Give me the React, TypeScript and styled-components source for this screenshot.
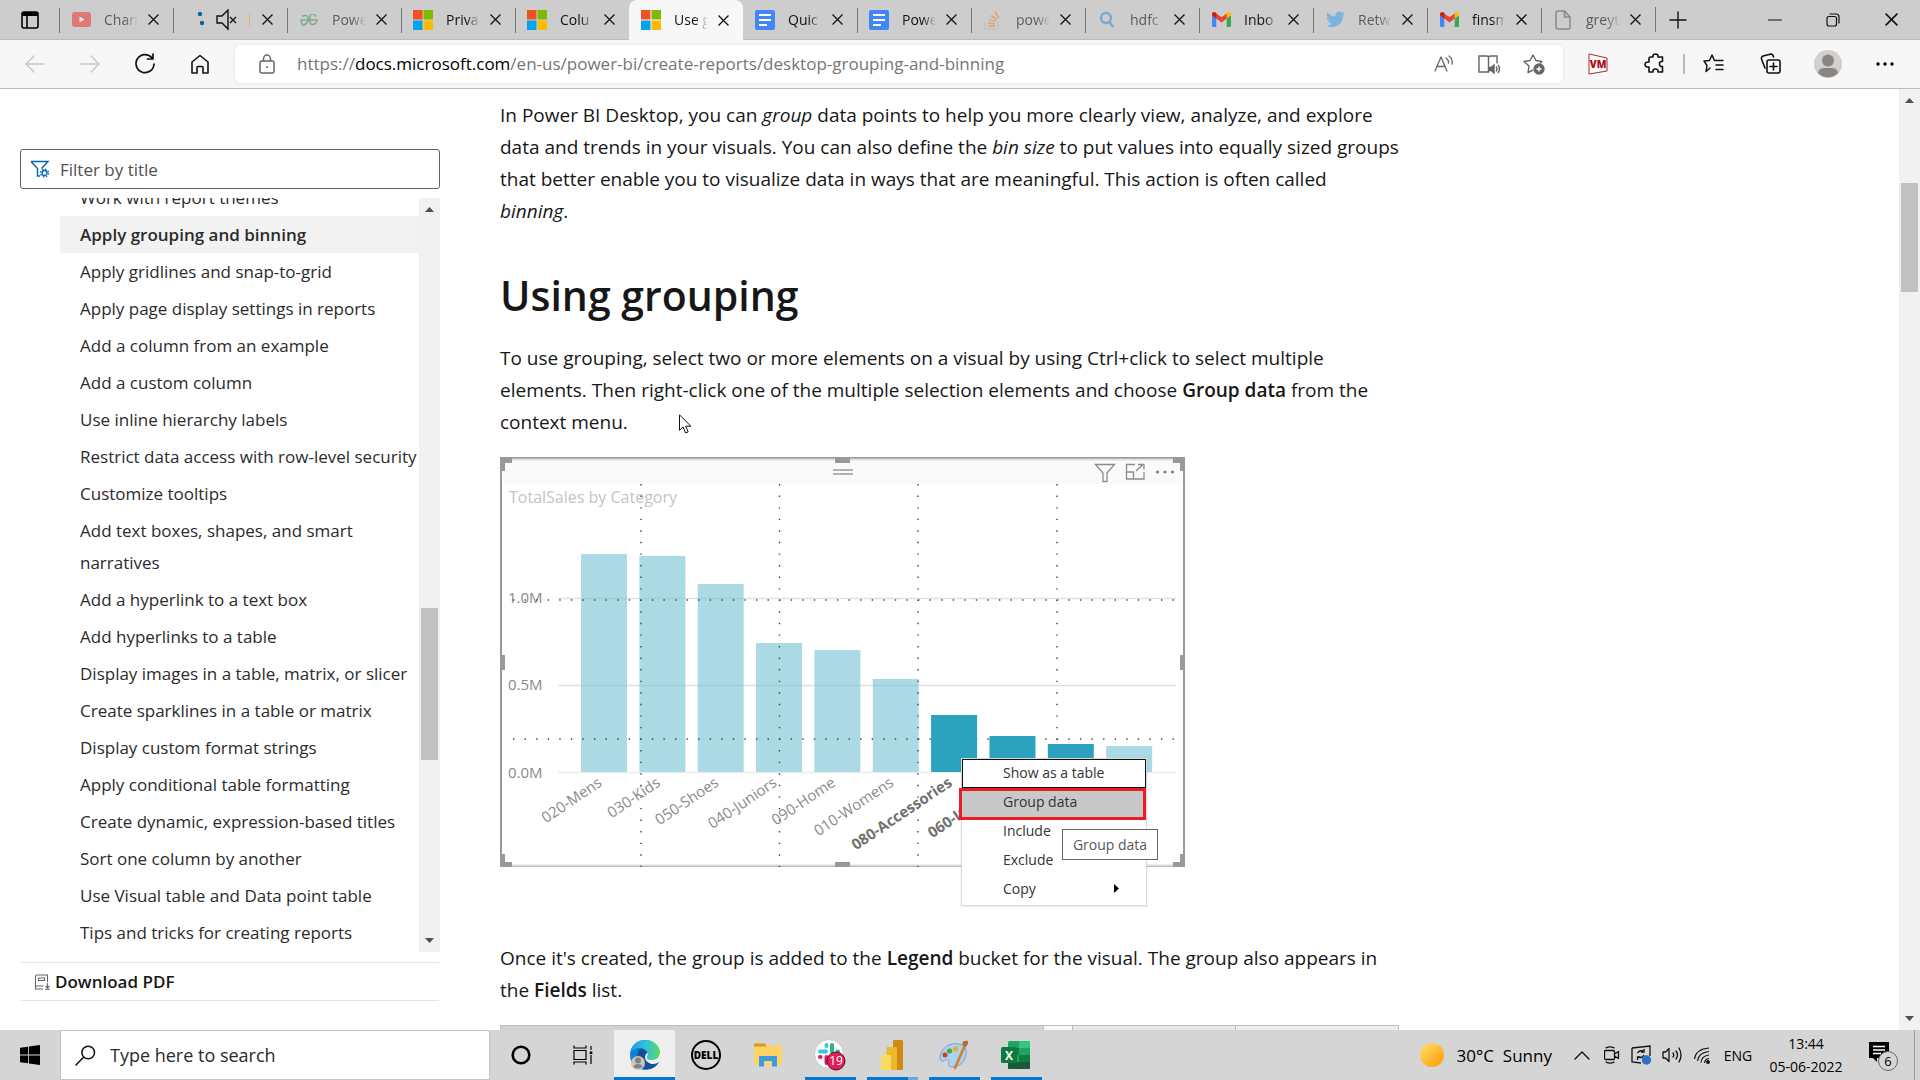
import React from "react";
import styled, { createGlobalStyle } from "styled-components";

const Global = createGlobalStyle`
  * { box-sizing: border-box; }
  body { margin: 0; background: #fff; font-family: "Open Sans", "Noto Sans", sans-serif; color: #171717; }
  button { font: inherit; color: inherit; background: none; border: 0; padding: 0; margin: 0; }
  a { color: inherit; text-decoration: none; }
  input { font: inherit; color: inherit; border: 0; background: none; outline: 0; padding: 0; min-width: 0; }
  svg { display: block; flex: none; }
`;

const Screen = styled.div`
  display: flex;
  flex-direction: column;
  height: 100vh;
  overflow: hidden;
`;

/* ---------- tab strip ---------- */
const TabStrip = styled.header`
  display: flex;
  align-items: stretch;
  height: 40px;
  background: #cdcdcd;
  border-bottom: 1px solid #bdbdbd;
`;
const TabActions = styled.button`
  width: 59px;
  display: grid;
  place-items: center;
`;
const Tabs = styled.nav`
  display: flex;
  align-items: stretch;
`;
const Tab = styled.div<{ $active?: boolean; $line?: boolean; $muted?: boolean }>`
  position: relative;
  display: flex;
  align-items: center;
  justify-content: ${(p) => (p.$muted ? "flex-end" : "flex-start")};
  width: 114px;
  height: ${(p) => (p.$active ? 40 : 39)}px;
  padding: 0 14px 0 11px;
  background: ${(p) => (p.$active ? "#f7f7f7" : "transparent")};
  border-radius: ${(p) => (p.$active ? "8px 8px 0 0" : "0")};
  &::before {
    content: "";
    display: ${(p) => (p.$line ? "block" : "none")};
    position: absolute;
    left: 0;
    top: 8px;
    width: 1px;
    height: 25px;
    background: #777;
  }
`;
const StripEnd = styled.span`
  align-self: center;
  width: 1px;
  height: 25px;
  background: #777;
`;
const Favicon = styled.span<{ $dim?: boolean }>`
  width: 22px;
  height: 20px;
  display: grid;
  place-items: center;
  opacity: ${(p) => (p.$dim ? 0.5 : 1)};
`;
const AudioIcon = styled.span`
  margin-right: 11px;
`;
const TabTitle = styled.a<{ $dim?: boolean }>`
  flex: 1;
  margin: 0 9px 0 12px;
  font-size: 14px;
  line-height: 20px;
  white-space: nowrap;
  overflow: hidden;
  color: ${(p) => (p.$dim ? "#5c5c5c" : "#111")};
  mask-image: linear-gradient(90deg, #000 60%, transparent);
`;
const CloseTab = styled.button`
  width: 12px;
  height: 12px;
  display: grid;
  place-items: center;
`;
const NewTab = styled.button`
  width: 44px;
  display: grid;
  place-items: center;
`;
const WindowButtons = styled.div`
  display: flex;
  margin-left: auto;
`;
const WindowButton = styled.button`
  width: 58px;
  display: grid;
  place-items: center;
`;

/* ---------- toolbar ---------- */
const Toolbar = styled.div`
  display: flex;
  align-items: center;
  height: 49px;
  padding: 0 7px;
  background: #f7f7f7;
  border-bottom: 1px solid #bdbdbd;
`;
const ToolButton = styled.button<{ $wide?: boolean }>`
  width: ${(p) => (p.$wide ? 57 : 55)}px;
  height: 38px;
  display: grid;
  place-items: center;
`;
const AddressBar = styled.div`
  flex: 1;
  display: flex;
  align-items: center;
  height: 38px;
  margin: 0 6px 0 8px;
  padding: 0 7px 0 22px;
  border-radius: 5px;
  background: #fff;
  box-shadow: 0 0 3px rgba(0, 0, 0, 0.1);
`;
const AddressField = styled.label`
  position: relative;
  flex: 1;
  margin-left: 20px;
  font-size: 17px;
  line-height: 26px;
  color: #757575;
  white-space: nowrap;
`;
const AddressInput = styled.input`
  position: absolute;
  inset: 0;
  width: 100%;
`;
const Host = styled.span`
  color: #000;
`;
const BarButton = styled.button`
  width: 45px;
  height: 38px;
  display: grid;
  place-items: center;
`;
const ToolDivider = styled.span`
  width: 2px;
  height: 20px;
  background: #b9b9b9;
`;

/* ---------- page ---------- */
const Page = styled.div`
  flex: 1;
  min-height: 0;
  display: flex;
  background: #fff;
`;
const Sidebar = styled.aside`
  display: flex;
  flex-direction: column;
  width: 440px;
  padding: 60px 0 29px 20px;
  font-size: 17px;
`;
const FilterBox = styled.label`
  display: flex;
  align-items: center;
  gap: 10px;
  height: 40px;
  padding-left: 9px;
  border: 1px solid #606060;
  border-radius: 3px;
  input { flex: 1; font-size: 17px; }
  input::placeholder { color: #505050; opacity: 1; }
`;
const TocFrame = styled.div`
  flex: 1;
  min-height: 0;
  display: flex;
  margin: 9px 0 10px;
`;
const TocClip = styled.div`
  flex: 1;
  min-width: 0;
  overflow: hidden;
`;
const TocList = styled.ul`
  list-style: none;
  margin: -19px 0 0;
  padding: 0 0 0 40px;
`;
const TocItem = styled.li<{ $selected?: boolean }>`
  padding: 3px 0 2px 20px;
  line-height: 32px;
  color: #2b2b2b;
  font-weight: ${(p) => (p.$selected ? 600 : 400)};
  background: ${(p) => (p.$selected ? "#f2f2f2" : "transparent")};
`;
const Download = styled.button`
  display: flex;
  align-items: center;
  gap: 5px;
  height: 39px;
  margin: 0 1px;
  padding-left: 13px;
  border-top: 1px solid #e3e3e3;
  border-bottom: 1px solid #e3e3e3;
  font-weight: 600;
  font-size: 17px;
`;

const Track = styled.div`
  display: flex;
  flex-direction: column;
  align-items: center;
  width: 21px;
  background: #f1f1f1;
`;
const ArrowButton = styled.button`
  width: 21px;
  height: 23px;
  display: grid;
  place-items: center;
  &:last-child { margin-top: auto; }
`;
const Thumb = styled.div<{ $top: number; $size: number }>`
  width: 17px;
  margin-top: ${(p) => p.$top}px;
  height: ${(p) => p.$size}px;
  background: #c1c1c1;
`;

const Article = styled.main`
  flex: 1;
  min-width: 0;
  overflow: hidden;
  padding: 10px 60px 0;
`;
const Prose = styled.div`
  max-width: 899px;
  position: relative;
`;
const Paragraph = styled.p`
  margin: 0;
  font-size: 19px;
  line-height: 32px;
  b { font-weight: 600; }
`;
const Heading = styled.h2`
  margin: 41px 0 20px;
  font-size: 41px;
  line-height: 54px;
  font-weight: 600;
`;
const Figure = styled.figure`
  position: relative;
  margin: 19px 0 37px;
  height: 448px;
  width: 685px;
`;
const ContextMenu = styled.div`
  position: absolute;
  left: 461px;
  top: 301px;
  width: 186px;
  height: 148px;
  background: #fff;
  border: 1px solid #dadada;
  font-size: 14px;
  color: #333;
  box-shadow: 0 1px 2px rgba(0, 0, 0, 0.1);
`;
const MenuItem = styled.button`
  display: flex;
  align-items: center;
  justify-content: space-between;
  width: 184px;
  height: 29px;
  padding: 0 27px 2px 41px;
`;
const FocusedItem = styled(MenuItem)`
  padding-left: 40px;
  border: 1px solid #111;
`;
const MarkedItem = styled(MenuItem)`
  position: relative;
  width: 187px;
  height: 32px;
  margin: 0 0 -3px -3px;
  padding-bottom: 5px;
  border: 3px solid #ec1c24;
  background: #c8c8c8;
`;
const Tooltip = styled.div`
  position: absolute;
  left: 562px;
  top: 372px;
  height: 31px;
  width: 96px;
  text-align: center;
  border: 1px solid #666;
  background: #fff;
  color: #575757;
  font-size: 14px;
  line-height: 29px;
`;
const NextFigure = styled.figure`
  display: flex;
  justify-content: flex-end;
  margin: 19px 0 0;
  height: 60px;
  border: 1px solid #bfbfbf;
  background: linear-gradient(#d2d2d2, #e4e4e4);
`;
const NextPane = styled.div<{ $width: number; $fill: string }>`
  width: ${(p) => p.$width}px;
  background: ${(p) => p.$fill};
  border-left: 1px solid #bfbfbf;
`;
const Pointer = styled.svg`
  position: absolute;
  left: 179px;
  top: 315px;
`;

/* ---------- taskbar ---------- */
const Taskbar = styled.footer`
  display: flex;
  align-items: stretch;
  height: 50px;
  background: #d5d5d5;
  color: #000;
`;
const StartButton = styled.button`
  width: 60px;
  display: grid;
  place-items: center;
`;
const SearchBox = styled.label`
  display: flex;
  align-items: center;
  gap: 14px;
  width: 430px;
  padding-left: 14px;
  background: #fff;
  border: 1px solid #c4c4c4;
  input { flex: 1; font-size: 18px; }
  input::placeholder { color: #2b2b2b; opacity: 1; }
`;
const Apps = styled.div`
  display: flex;
`;
const AppButton = styled.button<{ $open?: boolean; $current?: boolean }>`
  position: relative;
  display: grid;
  place-items: center;
  width: ${(p) => (p.$current ? 61 : 62)}px;
  height: 50px;
  background: ${(p) => (p.$current ? "#eee" : "transparent")};
  &::after {
    content: "";
    display: ${(p) => (p.$open || p.$current ? "block" : "none")};
    position: absolute;
    bottom: 0;
    left: ${(p) => (p.$current ? 0 : 6)}px;
    right: ${(p) => (p.$current ? 0 : 5)}px;
    height: 3px;
    background: #0078d7;
  }
`;
const GroupedAppButton = styled(AppButton)`
  &::after { background: linear-gradient(90deg, #0078d7 80%, #62a9e6 80%); }
`;
const Tray = styled.div`
  display: flex;
  align-items: center;
  margin-left: auto;
  padding-right: 5px;
`;
const Weather = styled.button`
  display: flex;
  align-items: center;
  gap: 13px;
  font-size: 17px;
  margin-right: 15px;
  span { white-space: pre; }
`;
const TrayButton = styled.button`
  width: 30px;
  height: 50px;
  display: grid;
  place-items: center;
`;
const Language = styled.button`
  width: 42px;
  font-size: 14px;
`;
const Clock = styled.button`
  width: 94px;
  font-size: 14px;
  line-height: 23px;
  text-align: center;
`;
const Notifications = styled.button`
  width: 62px;
  height: 50px;
  display: grid;
  place-items: center;
  border-right: 1px solid #9a9a9a;
`;

/* ---------- small drawings ---------- */
const Cross = ({ size = 11 }: { size?: number }) => (
  <svg width={size} height={size} viewBox="0 0 11 11" stroke="#111" strokeWidth="1.3">
    <path d="M.5.5l10 10M10.5.5l-10 10" />
  </svg>
);
const MsLogo = () => (
  <svg width="20" height="20" viewBox="0 0 20 20">
    <path fill="#f25022" d="M0 0h9.5v9.5H0z" />
    <path fill="#7fba00" d="M10.5 0H20v9.5h-9.5z" />
    <path fill="#00a4ef" d="M0 10.5h9.5V20H0z" />
    <path fill="#ffb900" d="M10.5 10.5H20V20h-9.5z" />
  </svg>
);
const DocsLogo = () => (
  <svg width="20" height="20" viewBox="0 0 20 20">
    <rect width="20" height="20" rx="2" fill="#4285f4" />
    <path stroke="#fff" strokeWidth="2" d="M4 5h12M4 10h12M4 15h8" />
  </svg>
);
const Gmail = () => (
  <svg width="19" height="15" viewBox="0 0 19 15">
    <path fill="#4285f4" d="M0 3v10.500Q0 15 1.500 15H4.300V5z" />
    <path fill="#34a853" d="M19 3v10.500q0 1.500-1.500 1.500h-2.800V5z" />
    <path fill="#ea4335" d="M4 1.200L9.500 5.300 15 1.200V6.300l-5.500 4.100L4 6.300z" />
    <path fill="#c5221f" d="M0 2.200C0 0 2.500-.6 4.300.9v5.600L0 3.500z" />
    <path fill="#fbbc04" d="M19 2.200C19 0 16.500-.6 14.700.9v5.600L19 3.500z" />
  </svg>
);
const YouTube = () => (
  <svg width="19" height="15" viewBox="0 0 19 15">
    <rect width="19" height="15" rx="3" fill="#f52525" />
    <path fill="#fff" d="M7.500 4.500v6l5-3z" />
  </svg>
);
const Muted = () => (
  <svg width="54" height="22" viewBox="0 0 54 22">
    <circle cx="4" cy="5" r="2.200" fill="#0b63a8" />
    <circle cx="6" cy="14" r="2.200" fill="#0b63a8" />
    <path d="M21 7h5l6-6v19l-6-6h-5z" fill="none" stroke="#111" strokeWidth="1.400" />
    <path d="M34 8l6 6M40 8l-6 6" stroke="#111" strokeWidth="1.300" />
    <path d="M53.500 5v13" stroke="#e3b45c" />
  </svg>
);
const Geeks = () => (
  <svg width="18" height="12" viewBox="0 0 18 12" fill="none" stroke="#2f8d46" strokeWidth="1.600">
    <path d="M2 2.500Q6.500 0 8 3.500T5.500 10 1 6h16q-1 4.500-4.500 4.500T10 3.500 16 2.500" />
  </svg>
);
const StackOverflow = () => (
  <svg width="18" height="20" viewBox="0 0 18 20" fill="none">
    <path d="M1 12v7h13v-7" stroke="#bbb" strokeWidth="1.600" />
    <path d="M4 16h7M4 13l7 .8M5 9.500l7 2M7 5.500l6 4M11 2l4 6" stroke="#f48024" strokeWidth="1.700" />
  </svg>
);
const SearchFav = () => (
  <svg width="16" height="18" viewBox="0 0 16 18" fill="none" stroke="#2b86d9" strokeWidth="2.400">
    <circle cx="7" cy="7" r="5" />
    <path d="M10.500 11l3.500 5" />
  </svg>
);
const Twitter = () => (
  <svg width="19" height="17" viewBox="0 0 24 20" fill="#2b9df0">
    <path d="M24 2.400a10 10 0 0 1-2.800.8A5 5 0 0 0 23.300.5a10 10 0 0 1-3.100 1.200 4.900 4.900 0 0 0-8.400 4.500A14 14 0 0 1 1.700 1 4.900 4.900 0 0 0 3.200 7.600a5 5 0 0 1-2.200-.6 4.900 4.900 0 0 0 4 4.900 5 5 0 0 1-2.300.1 4.900 4.900 0 0 0 4.600 3.400A10 10 0 0 1 0 17.400 14 14 0 0 0 21.500 5z" />
  </svg>
);
const FileFav = () => (
  <svg width="16" height="20" viewBox="0 0 16 20" fill="none" stroke="#444" strokeWidth="1.500">
    <path d="M1 2.500Q1 1 2.500 1H9.500l5.500 6v10.500q0 1.500-1.500 1.500h-11Q1 19 1 17.500zM9.500 1v6H15" />
  </svg>
);

type TabData = { title: string; icon: React.ReactNode; dim?: boolean; active?: boolean; line?: boolean };
const tabs: TabData[] = [
  { title: "Chan", icon: <YouTube />, dim: true, line: true },
  { title: "", icon: <Muted />, line: true },
  { title: "Powe", icon: <Geeks />, dim: true, line: true },
  { title: "Priva", icon: <MsLogo />, line: true },
  { title: "Colu", icon: <MsLogo />, line: true },
  { title: "Use g", icon: <MsLogo />, active: true },
  { title: "Quic", icon: <DocsLogo /> },
  { title: "Powe", icon: <DocsLogo />, line: true },
  { title: "powe", icon: <StackOverflow />, dim: true, line: true },
  { title: "hdfc", icon: <SearchFav />, dim: true, line: true },
  { title: "Inbo", icon: <Gmail />, line: true },
  { title: "Retw", icon: <Twitter />, dim: true, line: true },
  { title: "finsm", icon: <Gmail />, line: true },
  { title: "greyt", icon: <FileFav />, dim: true, line: true },
];

const Line = ({ w = 24, h = 24, c = "#111", sw = 1.4, d }: { w?: number; h?: number; c?: string; sw?: number; d: string }) => (
  <svg width={w} height={h} viewBox={`0 0 ${w} ${h}`} fill="none" stroke={c} strokeWidth={sw} strokeLinecap="round" strokeLinejoin="round">
    <path d={d} />
  </svg>
);
const Triangle = ({ down }: { down?: boolean }) => (
  <svg width="9" height="5" viewBox="0 0 9 5" fill="#505050">
    <path d={down ? "M0 0h9L4.500 5z" : "M0 5h9L4.500 0z"} />
  </svg>
);

function TabBar() {
  return (
    <TabStrip>
      <TabActions aria-label="Tab actions menu">
        <svg width="18" height="18" viewBox="0 0 18 18" fill="none" stroke="#000" strokeWidth="1.600">
          <rect x="1" y="1" width="16" height="16" rx="2" />
          <path d="M1 3h16" strokeWidth="4" />
          <path d="M6 4v13" />
        </svg>
      </TabActions>
      <Tabs aria-label="Tabs">
        {tabs.map((t, i) => (
          <Tab key={i} $active={t.active} $line={t.line} $muted={!t.title}>
            {t.title ? (
              <>
                <Favicon $dim={t.dim}>{t.icon}</Favicon>
                <TabTitle href="#" $dim={t.dim}>{t.title}</TabTitle>
              </>
            ) : (
              <AudioIcon>{t.icon}</AudioIcon>
            )}
            <CloseTab aria-label="Close tab"><Cross /></CloseTab>
          </Tab>
        ))}
        <StripEnd />
      </Tabs>
      <NewTab aria-label="New tab"><Line w={18} h={18} d="M9 1v16M1 9h16" /></NewTab>
      <WindowButtons>
        <WindowButton aria-label="Minimize"><Line w={14} h={14} sw={1.2} d="M.5 7h13" /></WindowButton>
        <WindowButton aria-label="Restore">
          <Line w={14} h={14} sw={1.2} d="M3 3.500h5.500q2 0 2 2V11q0 2-2 2H3q-2 0-2-2V5.500q0-2 2-2M4 1h6q3 0 3 3v6" />
        </WindowButton>
        <WindowButton aria-label="Close window"><Cross size={13} /></WindowButton>
      </WindowButtons>
    </TabStrip>
  );
}

function ToolbarRow() {
  return (
    <Toolbar>
      <ToolButton aria-label="Back"><Line w={20} h={18} c="#c6c6c6" d="M1 9h18M9 1L1 9l8 8" /></ToolButton>
      <ToolButton aria-label="Forward"><Line w={20} h={18} c="#c6c6c6" d="M1 9h18M11 1l8 8-8 8" /></ToolButton>
      <ToolButton aria-label="Refresh"><Line w={22} h={22} sw={1.7} d="M18 5A9 9 0 1 0 20 11M19 1v5h-5.500" /></ToolButton>
      <ToolButton aria-label="Home"><Line w={20} h={20} sw={1.6} d="M2 8l8-6.500L18 8v11h-5v-5.500q0-1-1-1H8q-1 0-1 1V19H2z" /></ToolButton>
      <AddressBar>
        <svg width="20" height="20" viewBox="0 0 20 20" fill="none" stroke="#666" strokeWidth="1.500">
          <rect x="3" y="7" width="14" height="12" rx="2" />
          <path d="M6.500 7V5a3.500 4 0 0 1 7 0v2" />
          <circle cx="10" cy="13" r="1" fill="#666" stroke="none" />
        </svg>
        <AddressField>
          <AddressInput aria-label="Address and search bar" />
          https://<Host>docs.microsoft.com</Host>/en-us/power-bi/create-reports/desktop-grouping-and-binning
        </AddressField>
        <BarButton aria-label="Read aloud"><Line w={20} h={20} c="#666" sw={1.3} d="M1 17L7 3l6 14M3 12.500h8M12 4q3 2 2.500 5M15 2q4 3 3 8" /></BarButton>
        <BarButton aria-label="Immersive reader">
          <svg width="22" height="22" viewBox="0 0 22 22" fill="none" stroke="#666" strokeWidth="1.400">
            <path d="M9 19H1V3h7.500q2 0 2 1.500V19H9M10.500 4.500q0-1.500 2-1.500H19v7.500" />
            <path d="M11 14.500h2l3-2.500v8l-3-2.500h-2z" fill="#666" />
            <path d="M18 13.500q2 2.500 0 5M20 12q3 4 0 8" />
          </svg>
        </BarButton>
        <BarButton aria-label="Add to favorites">
          <svg width="22" height="22" viewBox="0 0 22 22" fill="none" stroke="#666" strokeWidth="1.400" strokeLinejoin="round">
            <path d="M10 17l-5 2.500 1-6.500-5-4.500 6-1L10 2l3 5.500 6 1-2 2" />
            <circle cx="16" cy="16" r="5" fill="#666" />
            <path d="M16 13.500v5M13.500 16h5" stroke="#fff" />
          </svg>
        </BarButton>
      </AddressBar>
      <ToolButton $wide aria-label="VM extension">
        <svg width="20" height="22" viewBox="0 0 20 22">
          <path d="M1 1l18 4v13L1 21z" fill="#fff" stroke="#b5242b" />
          <text x="10" y="15" textAnchor="middle" fontSize="10" fontWeight="800" fill="#b00d14">VM</text>
        </svg>
      </ToolButton>
      <ToolButton $wide aria-label="Extensions">
        <Line w={22} h={22} sw={1.6} d="M6 4h3q-.5-3 2.500-3T14 4h4.500v4.500q-3-.5-3 2.500t3 2.500V19H14q.5-3-2.500-3T9 19H5v-5q-4 .5-4-2.500T5 9V5z" />
      </ToolButton>
      <ToolDivider />
      <ToolButton $wide aria-label="Favorites">
        <Line w={22} h={22} sw={1.5} d="M7 15l-4 3.500L4 12.500 1 8l5.500-.5L9 2l2.500 5.500H20M13 12h7M13 16.500h7" />
      </ToolButton>
      <ToolButton $wide aria-label="Collections">
        <Line w={22} h={22} sw={1.6} d="M9 7h9q2 0 2 2v9q0 2-2 2H9q-2 0-2-2V9q0-2 2-2M13.500 10v7M10 13.500h7M5 15L1.500 6q-.5-2 1.500-3l8-2q2 0 2.500 3" />
      </ToolButton>
      <ToolButton $wide aria-label="Profile">
        <svg width="28" height="28" viewBox="0 0 28 28">
          <circle cx="14" cy="14" r="14" fill="#d2d0ce" />
          <circle cx="14" cy="10.500" r="6" fill="#8a8583" />
          <path d="M4 23q1-5 6-5h8q5 0 6 5a14 14 0 0 1-20 0" fill="#8a8583" />
        </svg>
      </ToolButton>
      <ToolButton $wide aria-label="Settings and more">
        <svg width="18" height="4" viewBox="0 0 18 4"><circle cx="2" cy="2" r="1.700" /><circle cx="9" cy="2" r="1.700" /><circle cx="16" cy="2" r="1.700" /></svg>
      </ToolButton>
    </Toolbar>
  );
}

const toc = [
  "Work with report themes",
  "Apply grouping and binning",
  "Apply gridlines and snap-to-grid",
  "Apply page display settings in reports",
  "Add a column from an example",
  "Add a custom column",
  "Use inline hierarchy labels",
  "Restrict data access with row-level security",
  "Customize tooltips",
  "Add text boxes, shapes, and smart narratives",
  "Add a hyperlink to a text box",
  "Add hyperlinks to a table",
  "Display images in a table, matrix, or slicer",
  "Create sparklines in a table or matrix",
  "Display custom format strings",
  "Apply conditional table formatting",
  "Create dynamic, expression-based titles",
  "Sort one column by another",
  "Use Visual table and Data point table",
  "Tips and tricks for creating reports",
];

const bars = [
  { name: "020-Mens", top: 97 },
  { name: "030-Kids", top: 99 },
  { name: "050-Shoes", top: 127 },
  { name: "040-Juniors", top: 186 },
  { name: "090-Home", top: 193 },
  { name: "010-Womens", top: 222 },
  { name: "080-Accessories", top: 258, on: true },
  { name: "060-Intimate", top: 279, on: true },
  { name: "", top: 287, on: true },
  { name: "", top: 289 },
];

function Chart() {
  const barX = (i: number) => 81 + i * 58.35;
  return (
    <svg width="685" height="411" viewBox="0 0 685 411" role="img" aria-label="TotalSales by Category">
      <rect x="1" y="1" width="683" height="408" fill="#fff" stroke="#999" strokeWidth="2" />
      <rect x="3" y="5" width="679" height="22" fill="#fafafa" />
      <path d="M3 2.500h679M3 408.500h679" stroke="#dcdcdc" strokeWidth="2" />
      <path d="M58 141.500h618M58 228.500h618M58 315.500h618" stroke="#ececec" strokeWidth="1.500" />
      <g fontSize="15" fill="#8a8a8a">
        <text x="8" y="146">1.0M</text>
        <text x="8" y="233">0.5M</text>
        <text x="8" y="321">0.0M</text>
      </g>
      <text x="9" y="46" fontSize="16" fill="#c4c4c4">TotalSales by Category</text>
      {bars.map((b, i) => !b.on && <rect key={i} x={barX(i)} y={b.top} width="46" height={315 - b.top} fill="#abdae5" />)}
      <path d="M58 141.500h618M58 228.500h618" stroke="#000" strokeOpacity=".05" strokeWidth="1.500" />
      <g stroke="#444" strokeWidth="1.400" strokeDasharray="1.400 10.170">
        <path d="M141 27v383M279.500 27v383M418 27v383M557 27v383" />
        <path d="M13 143h664M13 282h664" />
      </g>
      {bars.map((b, i) => b.on && <rect key={i} x={barX(i)} y={b.top} width="46" height={315 - b.top} fill="#2ca2bf" />)}
      {bars.map((b, i) => b.name && (
        <text
          key={i}
          transform={`translate(${barX(i) + 22} 328) rotate(-34)`}
          textAnchor="end"
          fontSize="15"
          fontWeight={b.on ? 700 : 400}
          fill={b.on ? "#707070" : "#8a8a8a"}
        >
          {b.name}
        </text>
      ))}
      <path
        fill="#999"
        d="M0 1h12v5H5v8H0zM685 1h-12v5h7v8h5zM0 410h12v-5H5v-8H0zM685 410h-12v-5h7v-8h5zM335 1h15v5h-15zM335 405h15v5h-15zM0 198h5v15H0zM680 198h5v15h-5z"
      />
      <path d="M333 13h20M333 17h20" stroke="#999" strokeWidth="1.300" />
      <g fill="none" stroke="#8c8c8c" strokeWidth="1.300">
        <path d="M595.500 7.500h19L607 16v8.500h-4V16z" />
        <path d="M635 7.500h-8.500v14.500h17.500v-7M626.500 15h7v7M636 14l7.500-7M638 7.500h6v5" />
      </g>
      <g fill="#777"><circle cx="657.500" cy="15" r="1.500" /><circle cx="665" cy="15" r="1.500" /><circle cx="672.500" cy="15" r="1.500" /></g>
    </svg>
  );
}

function PageView() {
  return (
    <Page>
      <Sidebar>
        <FilterBox>
          <svg width="20" height="18" viewBox="0 0 20 18" fill="none" stroke="#0065b3" strokeWidth="1.400">
            <path d="M1 1.500h17l-6.500 7M1 1.500l6.500 7V16H10" />
            <circle cx="14.500" cy="13" r="2.500" strokeWidth="1.300" />
            <circle cx="14.500" cy="13" r="4" strokeWidth="1.200" strokeDasharray="1.600 1.550" />
          </svg>
          <input placeholder="Filter by title" aria-label="Filter by title" />
        </FilterBox>
        <TocFrame>
          <TocClip>
            <TocList>
              {toc.map((t, i) => (
                <TocItem key={t} $selected={i === 1}><a href="#">{t}</a></TocItem>
              ))}
            </TocList>
          </TocClip>
          <Track>
            <ArrowButton aria-label="Scroll contents up"><Triangle /></ArrowButton>
            <Thumb $top={387} $size={152} />
            <ArrowButton aria-label="Scroll contents down"><Triangle down /></ArrowButton>
          </Track>
        </TocFrame>
        <Download>
          <svg width="16" height="16" viewBox="0 0 16 16" fill="none" stroke="#666" strokeWidth="1.100">
            <path d="M13.500 8V1H3q-1.500 0-1.500 1.500V15H9M4.500 4h6v2.500h-6zM1.500 12H9.500M13.500 9v5M11.500 12l2 2 2-2M11 15.300h5" />
          </svg>
          Download PDF
        </Download>
      </Sidebar>
      <Article>
        <Prose>
          <Paragraph>
            In Power BI Desktop, you can <em>group</em> data points to help you more clearly view, analyze, and explore<br />
            data and trends in your visuals. You can also define the <em>bin size</em> to put values into equally sized groups<br />
            that better enable you to visualize data in ways that are meaningful. This action is often called<br />
            <em>binning</em>.
          </Paragraph>
          <Heading>Using grouping</Heading>
          <Paragraph>
            To use grouping, select two or more elements on a visual by using Ctrl+click to select multiple<br />
            elements. Then right-click one of the multiple selection elements and choose <b>Group data</b> from the<br />
            context menu.
          </Paragraph>
          <Figure>
            <Chart />
            <ContextMenu>
              <FocusedItem>Show as a table</FocusedItem>
              <MarkedItem>Group data</MarkedItem>
              <MenuItem>Include</MenuItem>
              <MenuItem>Exclude</MenuItem>
              <MenuItem>
                Copy
                <svg width="5" height="9" viewBox="0 0 5 9"><path d="M0 0l5 4.500L0 9z" /></svg>
              </MenuItem>
            </ContextMenu>
            <Tooltip role="tooltip">Group data</Tooltip>
          </Figure>
          <Paragraph>
            Once it's created, the group is added to the <b>Legend</b> bucket for the visual. The group also appears in<br />
            the <b>Fields</b> list.
          </Paragraph>
          <NextFigure>
            <NextPane $width={29} $fill="#f8f8f8" />
            <NextPane $width={163} $fill="#e8e7e5" />
            <NextPane $width={163} $fill="#eeedeb" />
          </NextFigure>
          <Pointer width="13" height="20" viewBox="0 0 13 20" fill="#fff" stroke="#111">
            <path d="M.5.8v15.500l3.600-3.400L6.600 19l2.600-1.100-2.500-5.700h5.200z" />
          </Pointer>
        </Prose>
      </Article>
      <Track>
        <ArrowButton aria-label="Scroll page up"><Triangle /></ArrowButton>
        <Thumb $top={71} $size={109} />
        <ArrowButton aria-label="Scroll page down"><Triangle down /></ArrowButton>
      </Track>
    </Page>
  );
}

function TaskbarRow() {
  return (
    <Taskbar>
      <StartButton aria-label="Start">
        <svg width="20" height="20" viewBox="0 0 20 20"><path d="M0 2.800L8.200 1.700v7.900H0zM9 1.600L20 0v9.600H9zM0 10.400h8.200v7.900L0 17.200zM9 10.400h11V20L9 18.400z" /></svg>
      </StartButton>
      <SearchBox>
        <Line w={21} h={21} sw={1.6} d="M19.500 7.500a6.300 6.300 0 1 1-12.600 0a6.300 6.300 0 1 1 12.600 0M8.800 12L1 20" />
        <input placeholder="Type here to search" aria-label="Search" />
      </SearchBox>
      <Apps>
        <AppButton aria-label="Cortana">
          <svg width="20" height="20" viewBox="0 0 20 20"><circle cx="10" cy="10" r="8.300" fill="none" stroke="#000" strokeWidth="2.600" /></svg>
        </AppButton>
        <AppButton aria-label="Task view">
          <svg width="20" height="20" viewBox="0 0 20 20" fill="none" stroke="#000" strokeWidth="1.200">
            <path d="M1 5.500h12v9H1zM1 .5v2.500h12V.5M1 19.500V17h12v2.500M18 1v4M18 10v9" />
            <path d="M16.700 6.500h2.600v2.600h-2.600z" fill="#000" stroke="none" />
          </svg>
        </AppButton>
        <AppButton aria-label="Microsoft Edge" $current>
          <svg width="30" height="30" viewBox="0 0 30 30">
            <defs>
              <linearGradient id="edgeTop" x1="0" x2="1"><stop offset="0" stopColor="#1f9be6" /><stop offset=".55" stopColor="#2fc3dc" /><stop offset="1" stopColor="#62d957" /></linearGradient>
            </defs>
            <circle cx="15" cy="15" r="15" fill="#0c7fd8" />
            <path d="M10 9c-4 4-4 14 3 19 6 3 13 0 16-6-6 3-13 1-14-5 0-2 1-3 2.500-4C15 10 13 9 10 9" fill="#154f94" />
            <path d="M30 12v10.500l-1-.5q-4 3-9 1.500-5-2-5-6.500 0-2.500 2-4z" fill="#eee" />
            <path d="M0 14C1 5 7 0 15 0c9 0 15 6 15 12.500 0 4.500-3.500 7.500-8 7.500-4 0-5.500-1.500-5-3 2-3 0-9-7-9-5 0-8.500 2.500-10 6z" fill="url(#edgeTop)" />
            <circle cx="8" cy="23" r="7" fill="#c9c7c5" />
            <circle cx="8" cy="20.500" r="3" fill="#85807d" />
            <path d="M3.500 27q.5-3 4.500-3t4.500 3q-4.500 3-9 0" fill="#85807d" />
          </svg>
        </AppButton>
        <AppButton aria-label="Dell">
          <svg width="30" height="30" viewBox="0 0 30 30">
            <circle cx="15" cy="15" r="14" fill="none" stroke="#000" strokeWidth="2" />
            <text x="15" y="18.500" textAnchor="middle" fontSize="10" fontWeight="800">DELL</text>
          </svg>
        </AppButton>
        <AppButton aria-label="File Explorer">
          <svg width="28" height="24" viewBox="0 0 28 24">
            <path d="M0 1.500Q0 .5 1 .5h10l2 3H0z" fill="#e39b00" />
            <path d="M0 4h12l2-1.500h13q1 0 1 1V22H0z" fill="#ffd263" />
            <path d="M5 23.500V14q0-1 1-1h16q1 0 1 1v9.500h-5V18h-8v5.500z" fill="#3c9be0" />
          </svg>
        </AppButton>
        <AppButton aria-label="Slack" $open>
          <svg width="34" height="34" viewBox="0 0 34 34">
            <circle cx="16" cy="16" r="14.500" fill="#fff" stroke="#c9c9c9" />
            <g strokeWidth="4" strokeLinecap="round">
              <path d="M13.500 7v1M7 13.500h6" stroke="#36c5f0" />
              <path d="M19 7v6.500M24.500 13.500h.5" stroke="#2eb67d" />
              <path d="M7 19h.5M13.500 19v6" stroke="#e01e5a" />
            </g>
            <circle cx="23" cy="23" r="9" fill="#e01e5a" stroke="#4a1230" />
            <text x="23" y="27.300" textAnchor="middle" fontSize="12" fill="#fff">19</text>
          </svg>
        </AppButton>
        <GroupedAppButton aria-label="Power BI" $open>
          <svg width="24" height="30" viewBox="0 0 24 30">
            <rect x="13" width="10" height="30" rx="1" fill="#d08a10" />
            <rect x="6.500" y="7" width="10.500" height="23" rx="1" fill="#ecb92c" />
            <rect x="1" y="15" width="10" height="15" rx="1" fill="#f9dc62" />
          </svg>
        </GroupedAppButton>
        <AppButton aria-label="Paint" $open>
          <svg width="30" height="30" viewBox="0 0 30 30">
            <path d="M1 17C2 8 11 2 20 4c6 1 8 6 7 11-1 7-7 12-14 12-4 0-4-3-3-5 0-3-3-3-5-1-3 1-4-1-4-4z" fill="#a9d3ee" stroke="#6fa5cd" />
            <circle cx="6" cy="15" r="2.500" fill="#e0352b" /><circle cx="10.500" cy="11" r="2.500" fill="#3faa36" /><circle cx="16.500" cy="9" r="2.500" fill="#f6a91c" />
            <path d="M26 5L16 28" stroke="#e07a1c" strokeWidth="2.500" strokeLinecap="round" />
            <path d="M23 4q1-4 6-3 1 4-3 6z" fill="#a9713c" />
          </svg>
        </AppButton>
        <AppButton aria-label="Excel" $open>
          <svg width="30" height="30" viewBox="0 0 30 30">
            <rect x="7" y="1" width="22" height="28" rx="1.500" fill="#21a366" />
            <path d="M18 1h10q1 0 1 1v6H18z" fill="#33c481" />
            <path d="M7 8h11v7H7z" fill="#107c41" /><path d="M18 15h11v7H18z" fill="#107c41" />
            <path d="M7 22h22v6q0 1-1 1H8q-1 0-1-1z" fill="#185c37" />
            <rect y="7" width="16" height="16" rx="1.500" fill="#0f7a40" />
            <text x="8" y="19.500" textAnchor="middle" fontSize="12" fontWeight="700" fill="#fff">X</text>
          </svg>
        </AppButton>
      </Apps>
      <Tray>
        <Weather>
          <svg width="24" height="24" viewBox="0 0 24 24">
            <defs><linearGradient id="sun" x1="0" y1="0" x2="1" y2="1"><stop offset="0" stopColor="#ffe36b" /><stop offset="1" stopColor="#ff9700" /></linearGradient></defs>
            <circle cx="12" cy="12" r="12" fill="url(#sun)" />
          </svg>
          <span>30°C  Sunny</span>
        </Weather>
        <TrayButton aria-label="Show hidden icons"><Line w={16} h={10} d="M1 9l7-7 7 7" /></TrayButton>
        <TrayButton aria-label="Meet now"><Line w={16} h={18} sw={1.3} d="M1.500 4.500h8q1 0 1 1v7q0 1-1 1h-8q-1 0-1-1v-7q0-1 1-1M10.500 8l4-2.500v7l-4-2.500M2 1.800q4-1.800 8 0M2 16.200q4 1.800 8 0" /></TrayButton>
        <TrayButton aria-label="Sync">
          <svg width="22" height="20" viewBox="0 0 22 20" fill="none" stroke="#111" strokeWidth="1.300">
            <path d="M1 3l18-2v10M1 3v14l9 1M6.500 8q3-4 6.500-1M13 4v3h-3M13 10q-2 4-6.500 2M6.500 15v-3h3" />
            <circle cx="15.500" cy="15" r="4.700" fill="#2b73c0" stroke="none" />
          </svg>
        </TrayButton>
        <TrayButton aria-label="Volume"><Line w={20} h={18} sw={1.3} d="M1 6h2.500L7 2.500v13L3.500 12H1zM11 7q1.500 2 0 4M14 5q3 4 0 8M17 2q4 7 0 14" /></TrayButton>
        <TrayButton aria-label="Network">
          <svg width="18" height="18" viewBox="0 0 18 18" fill="none" stroke="#111" strokeWidth="1.200">
            <path d="M1.500 13Q3 3 16 2M4.500 15Q5.500 6.500 16 5.500M8 16.500Q8.500 10 16 9" />
            <path d="M11.500 17q.5-4 4.500-4.500" /><circle cx="15" cy="16" r="1.300" fill="#111" />
          </svg>
        </TrayButton>
        <Language>ENG</Language>
        <Clock>13:44<br />05-06-2022</Clock>
        <Notifications aria-label="Notifications">
          <svg width="31" height="32" viewBox="0 0 31 32">
            <path d="M1 3h20v16H9v4l-4-4H1z" />
            <path d="M5 7.500h12M5 11h12M5 14.500h8" stroke="#fff" strokeWidth="1.300" />
            <circle cx="20" cy="22" r="9.500" fill="#d5d5d5" stroke="#666" />
            <text x="20" y="26.500" textAnchor="middle" fontSize="13">6</text>
          </svg>
        </Notifications>
      </Tray>
    </Taskbar>
  );
}

export default function App() {
  return (
    <Screen>
      <Global />
      <TabBar />
      <ToolbarRow />
      <PageView />
      <TaskbarRow />
    </Screen>
  );
}
